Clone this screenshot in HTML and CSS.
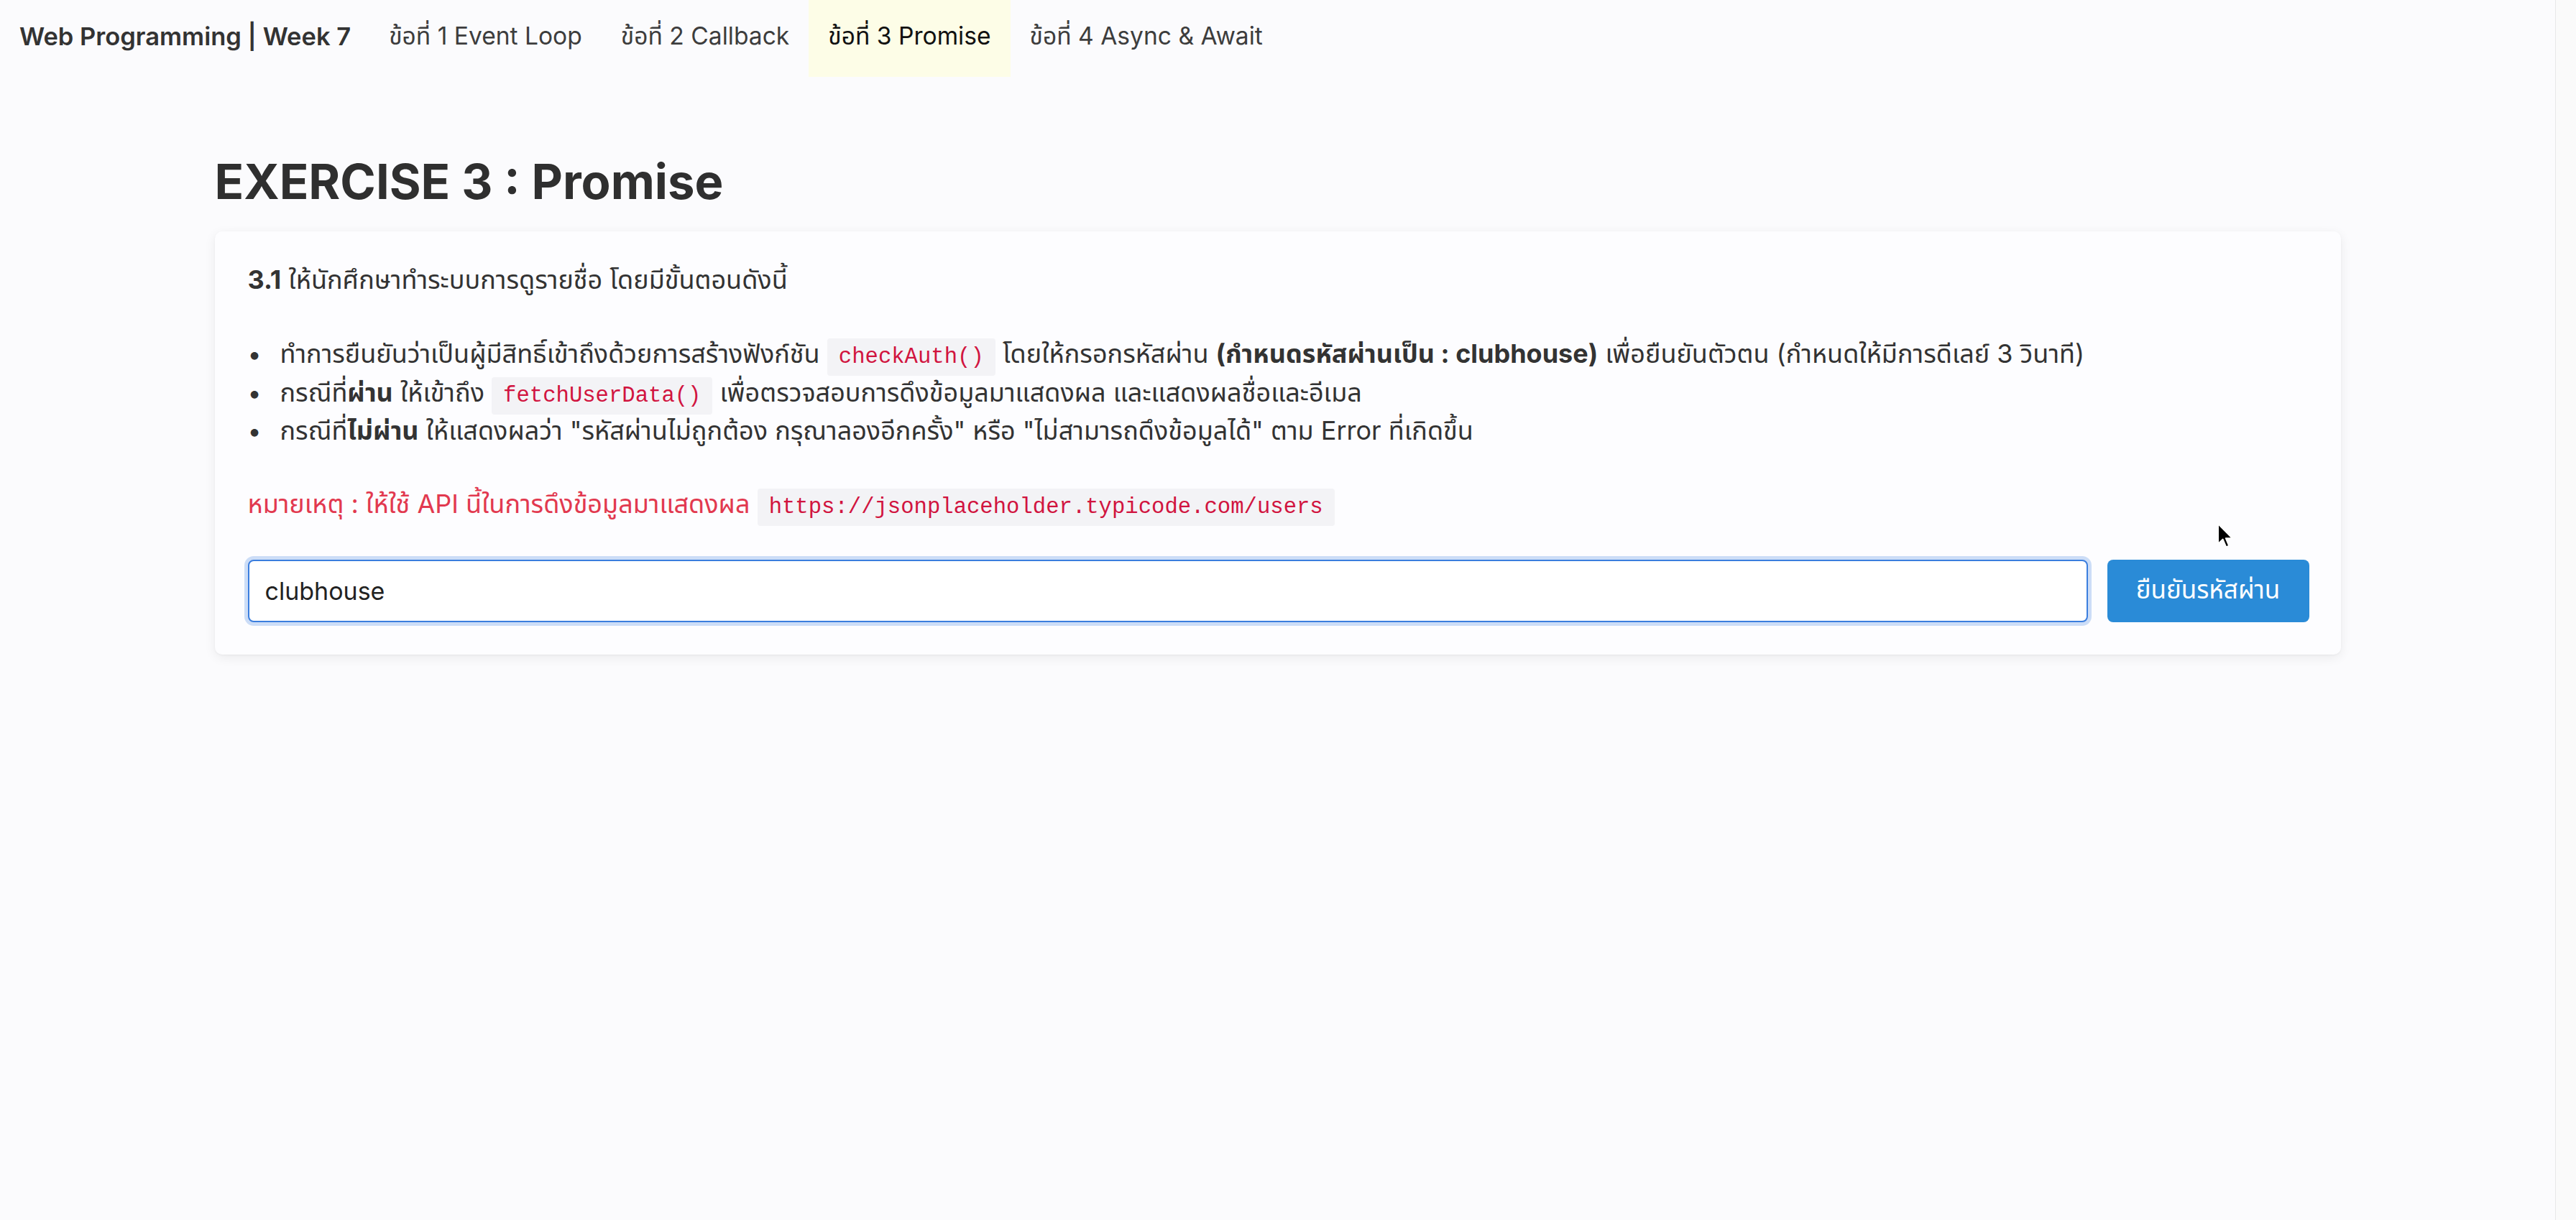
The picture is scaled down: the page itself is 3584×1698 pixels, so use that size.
FILE: index.html
```html
<!DOCTYPE html>
<html lang="th">
<head>
<meta charset="utf-8">
<title>Web Programming | Week 7</title>
<link rel="stylesheet" href="styles.css">
</head>
<body>
<div class="app">
  <div class="page">
    <nav class="navbar">
      <span class="brand">Web Programming | Week 7</span>
      <a class="nav-link">ข้อที่ 1 Event Loop</a>
      <a class="nav-link">ข้อที่ 2 Callback</a>
      <a class="nav-link active">ข้อที่ 3 Promise</a>
      <a class="nav-link">ข้อที่ 4 Async &amp; Await</a>
    </nav>
    <main class="container">
      <h1 class="title">EXERCISE 3 : Promise</h1>
      <section class="card">
        <p class="lead"><b>3.1</b> ให้นักศึกษาทำระบบการดูรายชื่อ โดยมีขั้นตอนดังนี้</p>
        <ul class="steps">
          <li>ทำการยืนยันว่าเป็นผู้มีสิทธิ์เข้าถึงด้วยการสร้างฟังก์ชัน <code>checkAuth()</code> โดยให้กรอกรหัสผ่าน <b>(กำหนดรหัสผ่านเป็น : clubhouse)</b> เพื่อยืนยันตัวตน (กำหนดให้มีการดีเลย์ 3 วินาที)</li>
          <li>กรณีที่<b>ผ่าน</b> ให้เข้าถึง <code>fetchUserData()</code> เพื่อตรวจสอบการดึงข้อมูลมาแสดงผล และแสดงผลชื่อและอีเมล</li>
          <li>กรณีที่<b>ไม่ผ่าน</b> ให้แสดงผลว่า "รหัสผ่านไม่ถูกต้อง กรุณาลองอีกครั้ง" หรือ "ไม่สามารถดึงข้อมูลได้" ตาม Error ที่เกิดขึ้น</li>
        </ul>
        <p class="note">หมายเหตุ : ให้ใช้ API นี้ในการดึงข้อมูลมาแสดงผล <code>https://jsonplaceholder.typicode.com/users</code></p>
        <div class="form-row">
          <input class="input" type="text" value="clubhouse">
          <button class="btn">ยืนยันรหัสผ่าน</button>
        </div>
      </section>
    </main>
  </div>
  <div class="scrollbar"></div>
</div>
<svg class="cursor" width="26" height="38" viewBox="0 0 13 19">
  <path d="M1 1 L1 15 L4.3 11.8 L6.6 17.2 L8.6 16.3 L6.4 11.1 L11 11.1 Z" fill="#000" stroke="#fff" stroke-width="1" stroke-linejoin="round"/>
</svg>
</body>
</html>
```
FILE: styles.css
```css
* { box-sizing: border-box; }
html, body { margin: 0; padding: 0; }
body {
  background: #fbfbfd;
  color: #333;
  font-family: Inter, "Noto Sans Thai", "Noto Sans Thai UI", "Noto Sans", sans-serif;
  font-size: 35px;
  line-height: 1.5;
  min-height: 1698px;
  position: relative;
}
.app { display: flex; min-height: 1698px; }
.page { flex: 1; min-width: 0; }
.scrollbar {
  width: 29px;
  background: #fafafa;
  border-left: 1px solid #e7e7e9;
}

.navbar {
  display: flex;
  align-items: stretch;
  height: 107px;
  padding-left: 27px;
}
.brand {
  display: flex;
  align-items: center;
  padding-bottom: 6px;
  font-weight: 600;
  font-size: 34.5px;
  color: #333;
  margin-right: 26px;
}
.nav-link {
  display: flex;
  align-items: center;
  padding: 0 27px 6px;
  font-size: 33.6px;
  color: #3d3d3d;
  text-decoration: none;
}
.nav-link.active {
  background: #fdfde7;
  color: #111;
}

.container {
  width: 2958px;
  margin: 0 auto;
}
.title {
  margin: 106px 0 29px;
  font-size: 67px;
  line-height: 1.2;
  font-weight: 700;
  color: #2f2f2f;
}
.card {
  background: #fdfdff;
  border-radius: 10px;
  box-shadow: 0 4px 16px rgba(0, 0, 0, 0.07), 0 1px 3px rgba(0, 0, 0, 0.04);
  padding: 40px 44px 45px 46px;
  font-size: 36px;
}
.lead { margin: 0 0 50px; }
.lead b { font-weight: 700; }
.steps {
  margin: 0 0 47px;
  padding-left: 0;
  list-style: none;
}
.steps li {
  line-height: 52.5px;
  padding-left: 45px;
  text-indent: -45px;
}
.steps li::before {
  content: "•";
  display: inline-block;
  width: 45px;
  text-indent: 0;
  font-size: 34px;
}
code {
  font-family: "Liberation Mono", "Courier New", monospace;
  font-size: 30.6px;
  line-height: 1;
  color: #d1143f;
  background: #f3f3f6;
  padding: 9px 16px;
  border-radius: 4px;
}
.note {
  margin: 0 0 51px;
  color: #e2394f;
}
.form-row {
  display: flex;
  gap: 27px;
}
.input {
  flex: 1;
  height: 87px;
  border: 2px solid #3b7ede;
  border-radius: 8px;
  box-shadow: 0 0 0 5px rgba(59, 126, 222, 0.25);
  background: #fff;
  font-family: Inter, "Noto Sans", sans-serif;
  font-size: 34px;
  color: #222;
  padding: 0 22px;
  outline: none;
}
.btn {
  width: 281px;
  height: 87px;
  border: 0;
  border-radius: 8px;
  background: #2a8bd7;
  color: #fff;
  font-family: Inter, "Noto Sans Thai", "Noto Sans", sans-serif;
  font-size: 35px;
}
.cursor {
  position: absolute;
  left: 3084px;
  top: 727px;
}
```
